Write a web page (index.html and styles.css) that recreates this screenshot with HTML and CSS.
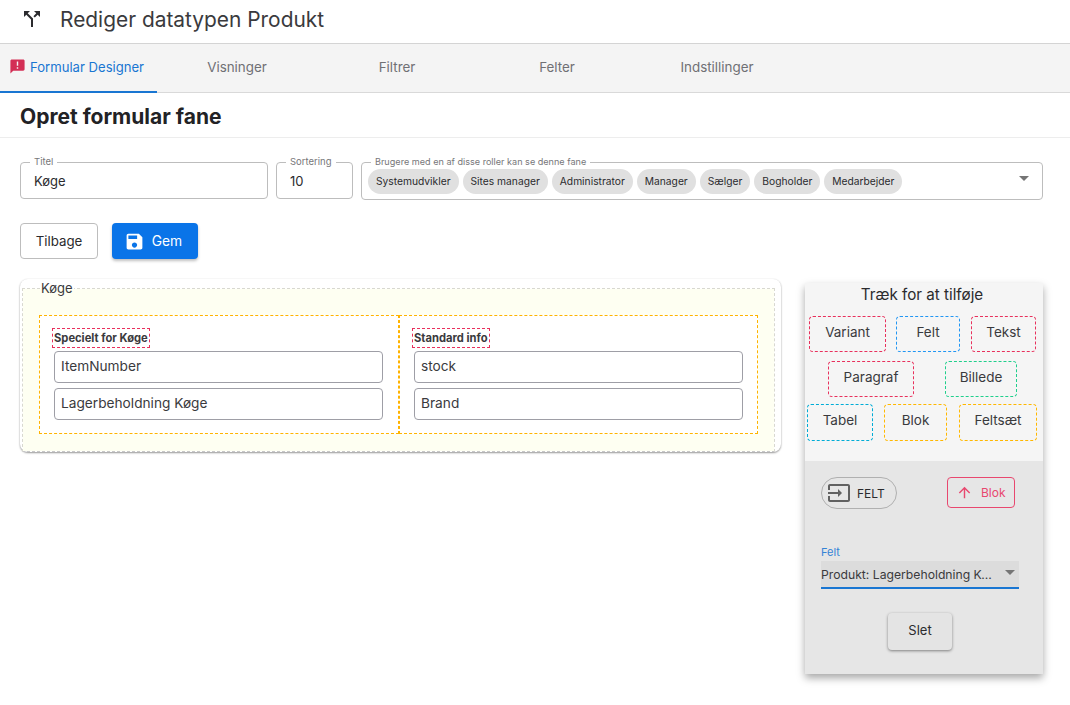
FILE: index.html
```html
<!DOCTYPE html>
<html lang="da">

<head>
    <meta charset="UTF-8">
    <meta name="viewport" content="width=device-width, initial-scale=1.0">
    <title>Rediger datatypen Produkt</title>
    <link rel="stylesheet" href="styles.css">
</head>

<body>
    <header class="topbar">
        <svg class="topbar-icon" viewBox="0 0 24 24"><path d="M14 4l2.29 2.29-2.88 2.88 1.42 1.42 2.88-2.88L20 10V4zm-4 0H4v6l2.29-2.29 4.71 4.7V20h2v-8.41l-5.29-5.3z"/></svg>
        <h1>Rediger datatypen Produkt</h1>
    </header>

    <nav class="tabs">
        <a class="tab tab-active">
            <svg class="tab-icon" viewBox="0 0 24 24"><path d="M20 2H4c-1.1 0-1.99.9-1.99 2L2 22l4-4h14c1.1 0 2-.9 2-2V4c0-1.1-.9-2-2-2zm-7 9h-2V5h2v6zm0 4h-2v-2h2v2z"/></svg>
            Formular Designer
        </a>
        <a class="tab">Visninger</a>
        <a class="tab">Filtrer</a>
        <a class="tab">Felter</a>
        <a class="tab">Indstillinger</a>
    </nav>

    <h2 class="page-title">Opret formular fane</h2>

    <main class="content">
        <div class="fields">
            <fieldset class="field field-title">
                <legend>Titel</legend>
                <span class="field-value">Køge</span>
            </fieldset>
            <fieldset class="field field-sort">
                <legend>Sortering</legend>
                <span class="field-value">10</span>
            </fieldset>
            <fieldset class="field field-roles">
                <legend>Brugere med en af disse roller kan se denne fane</legend>
                <div class="roles">
                    <span class="role">Systemudvikler</span>
                    <span class="role">Sites manager</span>
                    <span class="role">Administrator</span>
                    <span class="role">Manager</span>
                    <span class="role">Sælger</span>
                    <span class="role">Bogholder</span>
                    <span class="role">Medarbejder</span>
                </div>
                <span class="caret caret-roles"></span>
            </fieldset>
        </div>

        <div class="actions">
            <button class="btn btn-back">Tilbage</button>
            <button class="btn btn-save">
                <svg class="btn-icon" viewBox="0 0 24 24"><path d="M17 3H5c-1.11 0-2 .9-2 2v14c0 1.1.89 2 2 2h14c1.1 0 2-.9 2-2V7l-4-4zm-5 16c-1.66 0-3-1.34-3-3s1.34-3 3-3 3 1.34 3 3-1.34 3-3 3zm3-10H5V5h10v4z"/></svg>
                Gem
            </button>
        </div>

        <div class="designer">
            <section class="canvas">
                <fieldset class="tab-frame">
                    <legend>Køge</legend>
                    <div class="columns">
                        <div class="column column-left">
                            <div class="column-head"><span class="column-label">Specielt for Køge</span></div>
                            <div class="input-box">ItemNumber</div>
                            <div class="input-box">Lagerbeholdning Køge</div>
                        </div>
                        <div class="column column-right">
                            <div class="column-head"><span class="column-label">Standard info</span></div>
                            <div class="input-box">stock</div>
                            <div class="input-box">Brand</div>
                        </div>
                    </div>
                </fieldset>
            </section>

            <aside class="panel">
                <div class="panel-top">
                    <div class="panel-title">Træk for at tilføje</div>
                    <div class="tool-row tool-row-1">
                        <span class="tool tool-red tool-variant">Variant</span>
                        <span class="tool tool-blue tool-felt">Felt</span>
                        <span class="tool tool-red tool-tekst">Tekst</span>
                    </div>
                    <div class="tool-row tool-row-2">
                        <span class="tool tool-red tool-paragraf">Paragraf</span>
                        <span class="tool tool-green tool-billede">Billede</span>
                    </div>
                    <div class="tool-row tool-row-3">
                        <span class="tool tool-cyan tool-tabel">Tabel</span>
                        <span class="tool tool-yellow tool-blok">Blok</span>
                        <span class="tool tool-yellow tool-feltsaet">Feltsæt</span>
                    </div>
                </div>
                <div class="panel-bottom">
                    <div class="panel-actions">
                        <span class="felt-chip">
                            <svg class="chip-icon" viewBox="0 0 24 24"><path d="M21 3.01H3c-1.1 0-2 .9-2 2V9h2V4.99h18v14.03H3V15H1v4.01c0 1.1.9 1.98 2 1.98h18c1.1 0 2-.88 2-1.98v-14c0-1.11-.9-2-2-2zM11 16l4-4-4-4v3H1v2h10v3z"/></svg>
                            FELT
                        </span>
                        <span class="blok-btn">
                            <svg class="blok-icon" viewBox="0 0 24 24"><path d="M4 12l1.41 1.41L11 7.83V20h2V7.83l5.58 5.59L20 12l-8-8-8 8z"/></svg>
                            Blok
                        </span>
                    </div>
                    <div class="select-label">Felt</div>
                    <div class="select">
                        <span class="select-value">Produkt: Lagerbeholdning Køge</span>
                        <span class="caret caret-select"></span>
                    </div>
                    <button class="btn-delete">Slet</button>
                </div>
            </aside>
        </div>
    </main>
</body>

</html>
```

FILE: styles.css
```css
* {
    box-sizing: border-box;
}

body {
    margin: 0;
    min-height: 705px;
    font-family: Inter, "Noto Sans", sans-serif;
    color: #2b2b2e;
    background-color: white;
}

.topbar {
    display: flex;
    align-items: center;
    height: 44px;
    padding-left: 20px;
    padding-bottom: 5px;
    border-bottom: 1px solid #d4d4d4;
}

.topbar-icon {
    width: 24px;
    height: 24px;
    fill: #2b2b2e;
}

.topbar h1 {
    margin: 0 0 0 16px;
    font-size: 20.9px;
    font-weight: 400;
    color: #3a3a3d;
}

.tabs {
    display: flex;
    height: 49px;
    background-color: #f4f4f4;
    border-bottom: 1px solid #d9d9d9;
}

.tab {
    display: flex;
    align-items: center;
    justify-content: center;
    width: 160px;
    padding-bottom: 2px;
    font-size: 13.4px;
    color: #707074;
}

.tab-active {
    justify-content: flex-start;
    width: 157px;
    padding-left: 9px;
    font-size: 13.1px;
    color: #1976d2;
    border-bottom: 2px solid #1976d2;
    margin-bottom: -1px;
}

.tab-icon {
    width: 17px;
    height: 17px;
    margin-right: 4px;
    fill: #d32f55;
}

.page-title {
    margin: 0;
    height: 45px;
    padding: 11px 20px 0;
    font-size: 21px;
    font-weight: 700;
    color: #222225;
    border-bottom: 1px solid #ededed;
}

.content {
    padding: 18px 27px 0 20px;
}

.fields {
    display: flex;
    gap: 8px;
}

.field {
    position: relative;
    margin: 0;
    padding: 0 0 0 13px;
    border: 1px solid #bdbdbd;
    border-radius: 4px;
    min-width: 0;
}

.field legend {
    margin-left: -4px;
    padding: 0 4px;
    font-size: 9.5px;
    line-height: 12px;
    color: #77777a;
    white-space: nowrap;
}

.field-title {
    width: 248px;
    height: 43px;
}

.field-sort {
    width: 77px;
    height: 43px;
}

.field-roles {
    flex: 1;
    height: 44px;
    padding-left: 6px;
}

.field-roles legend {
    margin-left: 3px;
    font-size: 9.1px;
}

.field-value {
    display: block;
    font-size: 13px;
    line-height: 26px;
}

.roles {
    display: flex;
    gap: 4px;
    padding-top: 1px;
}

.role {
    height: 25px;
    padding: 0 8px;
    border-radius: 13px;
    background-color: #e0e0e0;
    font-size: 10.25px;
    line-height: 25px;
    color: #2b2b2e;
}

.caret {
    position: absolute;
    width: 0;
    height: 0;
    border-left: 5px solid transparent;
    border-right: 5px solid transparent;
    border-top: 5px solid #757575;
}

.caret-roles {
    right: 13px;
    top: 8px;
}

.actions {
    display: flex;
    gap: 14px;
    margin-top: 23px;
}

.btn {
    display: flex;
    align-items: center;
    justify-content: center;
    height: 36px;
    border-radius: 4px;
    font-family: inherit;
    font-size: 13.3px;
}

.btn-back {
    width: 78px;
    border: 1px solid #bdbdbd;
    background-color: white;
    color: #2b2b2e;
}

.btn-save {
    width: 86px;
    padding: 0 4px 0 0;
    border: 0;
    background-color: #0a74e8;
    color: white;
    font-size: 13.8px;
    box-shadow: 0 2px 3px rgba(0, 0, 0, 0.25);
}

.btn-icon {
    width: 21px;
    height: 21px;
    margin-right: 7px;
    fill: white;
}

.designer {
    display: flex;
    align-items: flex-start;
    gap: 24px;
    margin-top: 20px;
}

.canvas {
    width: 761px;
    height: 173px;
    padding: 0 6px 0 2px;
    border-radius: 8px;
    background-color: white;
    box-shadow: 0 1px 2px rgba(0, 0, 0, 0.4), 0 0 2px rgba(0, 0, 0, 0.06);
}

.tab-frame {
    height: 173px;
    margin: 0;
    padding: 17px 16px 0;
    min-width: 0;
    border: 1px dashed #d8d8d0;
    border-bottom-color: #c8c8c8;
    background-color: #fefff2;
    background-clip: padding-box;
}

.tab-frame legend {
    margin-left: 1px;
    padding: 0 1px;
    font-size: 13px;
    line-height: 19px;
    color: #3a3a3d;
}

.columns {
    display: flex;
    height: 119px;
    background-color: white;
}

.column {
    padding: 12px 14px 0;
    border: 1px dashed #ffb300;
}

.column-left {
    width: 360px;
}

.column-right {
    width: 359px;
}

.column-head {
    display: flex;
    align-items: flex-start;
    height: 23px;
    margin-left: -2px;
}

.column-label {
    height: 20px;
    padding: 0 1px;
    border: 1px dashed #e8305c;
    font-size: 11.2px;
    font-weight: 700;
    line-height: 18px;
    color: #3a3a3d;
}

.input-box {
    width: 329px;
    height: 32px;
    margin-bottom: 5px;
    padding-left: 6px;
    border: 1px solid #9e9ea6;
    border-radius: 4px;
    font-size: 13.7px;
    line-height: 29px;
    color: #3a3a3d;
}

.panel {
    width: 238px;
    height: 391px;
    margin-top: 4px;
    box-shadow: 0 4px 8px rgba(0, 0, 0, 0.35);
}

.panel-top {
    height: 178px;
    background-color: #f5f5f5;
}

.panel-title {
    height: 33px;
    padding-right: 4px;
    font-size: 15.2px;
    line-height: 24px;
    text-align: center;
    color: #2b2b2e;
}

.tool-row {
    display: flex;
    height: 45px;
}

.tool-row-1 {
    gap: 10px;
    padding-left: 4px;
}

.tool-row-2 {
    gap: 31px;
    padding-left: 23px;
}

.tool-row-3 {
    gap: 11px;
    padding-left: 2px;
    height: 37px;
    margin-top: -2px;
}

.tool {
    height: 36px;
    border: 1px dashed;
    border-radius: 4px;
    font-size: 13.5px;
    line-height: 31px;
    text-align: center;
    color: #3a3a3d;
}

.tool-red {
    border-color: #e8305c;
}

.tool-blue {
    border-color: #2196f3;
}

.tool-green {
    border-color: #1fcf8c;
}

.tool-cyan {
    border-color: #00acd6;
}

.tool-yellow {
    border-color: #ffb800;
}

.tool-variant {
    width: 77px;
}

.tool-felt {
    width: 64px;
}

.tool-tekst {
    width: 65px;
    margin-left: 1px;
}

.tool-paragraf {
    width: 86px;
}

.tool-billede {
    width: 72px;
}

.tool-tabel {
    width: 66px;
    height: 37px;
}

.tool-blok {
    width: 63px;
    height: 37px;
}

.tool-feltsaet {
    width: 78px;
    height: 37px;
    margin-left: 1px;
}

.panel-bottom {
    height: 213px;
    padding: 16px 24px 0 16px;
    background-color: #e6e6e6;
}

.panel-actions {
    display: flex;
    justify-content: space-between;
    padding-right: 4px;
}

.felt-chip {
    display: flex;
    align-items: center;
    width: 76px;
    height: 32px;
    padding-left: 5px;
    border: 1px solid #b0b0b0;
    border-radius: 16px;
    font-size: 12px;
    color: #2b2b2e;
}

.chip-icon {
    width: 24px;
    height: 24px;
    margin-right: 6px;
    fill: #616161;
}

.blok-btn {
    display: flex;
    align-items: center;
    width: 68px;
    height: 31px;
    padding-left: 8px;
    border: 1px solid #e8486f;
    border-radius: 4px;
    font-size: 12px;
    color: #e8486f;
}

.blok-icon {
    width: 17px;
    height: 17px;
    margin-right: 8px;
    fill: #e8486f;
}

.select-label {
    margin-top: 37px;
    font-size: 11px;
    line-height: 12px;
    color: #3583d6;
}

.select {
    position: relative;
    display: flex;
    align-items: center;
    width: 198px;
    height: 28px;
    margin-top: 3px;
    padding-right: 26px;
    background-color: #dcdcdc;
    border-bottom: 2px solid #1976d2;
}

.select-value {
    overflow: hidden;
    white-space: nowrap;
    text-overflow: ellipsis;
    font-size: 12.2px;
    color: #3a3a3d;
}

.caret-select {
    right: 4px;
    top: 9px;
}

.btn-delete {
    display: block;
    width: 64px;
    height: 37px;
    margin: 24px 0 0 67px;
    padding: 0 0 3px;
    border: 0;
    border-radius: 4px;
    background-color: #e4e4e4;
    box-shadow: 0 1px 3px rgba(0, 0, 0, 0.45);
    font-family: inherit;
    font-size: 13px;
    color: #2b2b2e;
}
```
